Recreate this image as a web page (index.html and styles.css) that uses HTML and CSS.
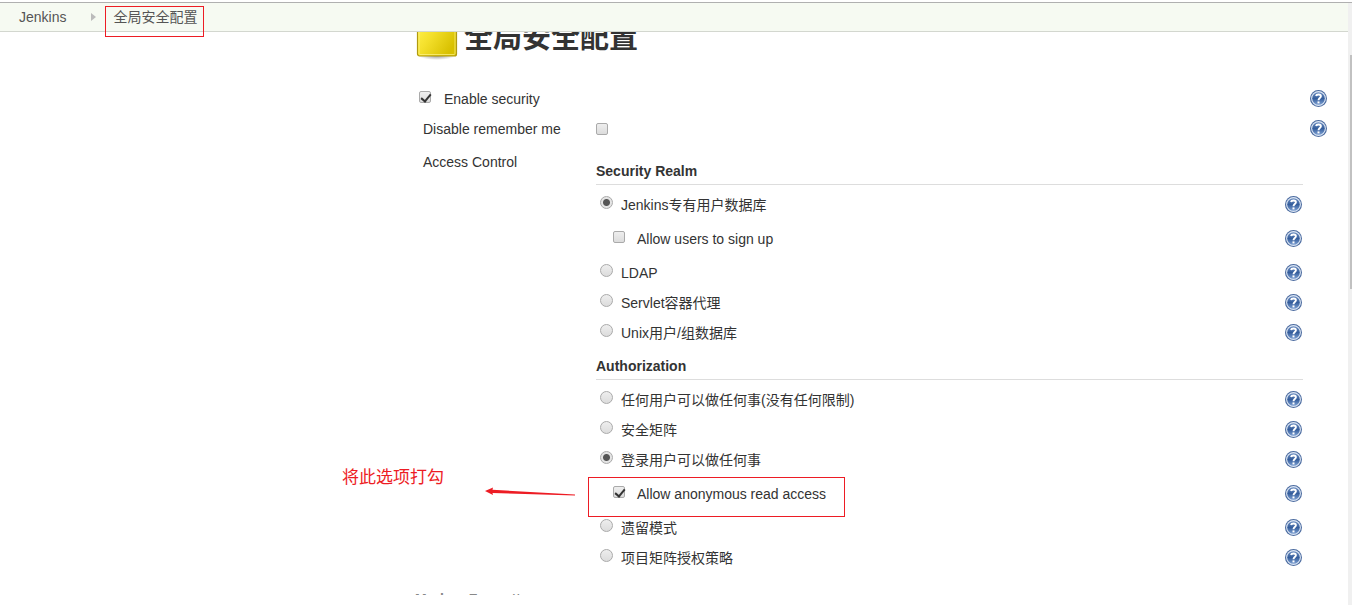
FILE: index.html
```
<!DOCTYPE html>
<html lang="zh-CN">
<head>
    <meta charset="UTF-8">
    <meta name="viewport" content="width=device-width, initial-scale=1.0">
    <title>全局安全配置 [Jenkins]</title>
    <link rel="stylesheet" href="styles.css">
</head>
<body>
    <svg class="defs" width="0" height="0" aria-hidden="true">
        <defs>
            <linearGradient id="helpFill" x1="0" y1="0" x2="0" y2="1">
                <stop offset="0" stop-color="#6f90c2"/>
                <stop offset="0.5" stop-color="#345d9c"/>
                <stop offset="1" stop-color="#7da0d2"/>
            </linearGradient>
            <linearGradient id="gold" x1="0" y1="0" x2="1" y2="0.5">
                <stop offset="0" stop-color="#fff04a"/>
                <stop offset="0.4" stop-color="#f4e02c"/>
                <stop offset="1" stop-color="#d8c000"/>
            </linearGradient>
            <radialGradient id="goldShadow">
                <stop offset="0" stop-color="#777" stop-opacity="0.7"/>
                <stop offset="1" stop-color="#777" stop-opacity="0"/>
            </radialGradient>
            <symbol id="help" viewBox="0 0 18 18">
                <circle cx="8.5" cy="8.5" r="8.5" fill="#4a6a9f"/>
                <circle cx="8.5" cy="8.5" r="7.4" fill="#dce6f4"/>
                <circle cx="8.5" cy="8.5" r="6.3" fill="url(#helpFill)"/>
                <path d="M6 6C6.4 4 10.9 3.8 10.9 6.3C10.9 8.1 8.5 8.1 8.5 10.3" fill="none" stroke="#fff" stroke-width="1.9"/>
                <rect x="7.5" y="11.4" width="2" height="2" fill="#fff"/>
            </symbol>
        </defs>
    </svg>

    <div class="page">
        <div class="main">
            <nav class="breadcrumbs">
                <a href="#">Jenkins</a>
                <svg class="separator" width="5" height="8" viewBox="0 0 5 8"><path d="M0 0L5 4L0 8Z" fill="#bbb"/></svg>
                <a href="#" class="current">全局安全配置</a>
            </nav>

            <div class="content">
                <h1>
                    <svg width="42" height="36" viewBox="0 0 42 36">
                        <ellipse cx="21" cy="31" rx="18" ry="4" fill="url(#goldShadow)"/>
                        <rect x="1.5" y="1" width="39" height="30" rx="2" fill="url(#gold)" stroke="#b09a10" stroke-width="1.2"/>
                        <rect x="3" y="2.5" width="36" height="27" rx="1" fill="none" stroke="#fff58a" stroke-opacity="0.7"/>
                    </svg>
                    全局安全配置
                </h1>

                <form>
                    <div class="setting enable">
                        <input type="checkbox" id="useSecurity" checked>
                        <label for="useSecurity">Enable security</label>
                        <button type="button" class="help" aria-label="Help"><svg><use href="#help"/></svg></button>
                    </div>
                    <div class="setting">
                        <label class="name" for="rememberMe">Disable remember me</label>
                        <input type="checkbox" id="rememberMe">
                        <button type="button" class="help" aria-label="Help"><svg><use href="#help"/></svg></button>
                    </div>

                    <div class="access">
                        <div class="name">Access Control</div>
                        <div class="groups">
                            <section>
                                <h2>Security Realm</h2>
                                <div class="option">
                                    <input type="radio" name="realm" id="realm0" checked>
                                    <label for="realm0">Jenkins专有用户数据库</label>
                                    <button type="button" class="help" aria-label="Help"><svg><use href="#help"/></svg></button>
                                </div>
                                <div class="option nested">
                                    <input type="checkbox" id="signup">
                                    <label for="signup">Allow users to sign up</label>
                                    <button type="button" class="help" aria-label="Help"><svg><use href="#help"/></svg></button>
                                </div>
                                <div class="option">
                                    <input type="radio" name="realm" id="realm1">
                                    <label for="realm1">LDAP</label>
                                    <button type="button" class="help" aria-label="Help"><svg><use href="#help"/></svg></button>
                                </div>
                                <div class="option">
                                    <input type="radio" name="realm" id="realm2">
                                    <label for="realm2">Servlet容器代理</label>
                                    <button type="button" class="help" aria-label="Help"><svg><use href="#help"/></svg></button>
                                </div>
                                <div class="option">
                                    <input type="radio" name="realm" id="realm3">
                                    <label for="realm3">Unix用户/组数据库</label>
                                    <button type="button" class="help" aria-label="Help"><svg><use href="#help"/></svg></button>
                                </div>
                            </section>

                            <section>
                                <h2>Authorization</h2>
                                <div class="option">
                                    <input type="radio" name="auth" id="auth0">
                                    <label for="auth0">任何用户可以做任何事(没有任何限制)</label>
                                    <button type="button" class="help" aria-label="Help"><svg><use href="#help"/></svg></button>
                                </div>
                                <div class="option">
                                    <input type="radio" name="auth" id="auth1">
                                    <label for="auth1">安全矩阵</label>
                                    <button type="button" class="help" aria-label="Help"><svg><use href="#help"/></svg></button>
                                </div>
                                <div class="option">
                                    <input type="radio" name="auth" id="auth2" checked>
                                    <label for="auth2">登录用户可以做任何事</label>
                                    <button type="button" class="help" aria-label="Help"><svg><use href="#help"/></svg></button>
                                </div>
                                <div class="option nested">
                                    <input type="checkbox" id="anonymous" checked>
                                    <label for="anonymous">Allow anonymous read access</label>
                                    <button type="button" class="help" aria-label="Help"><svg><use href="#help"/></svg></button>
                                    <span class="mark"></span>
                                    <svg class="arrow" width="90" height="10" viewBox="0 0 90 10">
                                        <path d="M0 4L8 0.5L7.5 2.8L90 7.6L90 8.4L7.5 6L8 8Z" fill="#ed1c24"/>
                                    </svg>
                                    <span class="note">将此选项打勾</span>
                                </div>
                                <div class="option">
                                    <input type="radio" name="auth" id="auth3">
                                    <label for="auth3">遗留模式</label>
                                    <button type="button" class="help" aria-label="Help"><svg><use href="#help"/></svg></button>
                                </div>
                                <div class="option">
                                    <input type="radio" name="auth" id="auth4">
                                    <label for="auth4">项目矩阵授权策略</label>
                                    <button type="button" class="help" aria-label="Help"><svg><use href="#help"/></svg></button>
                                </div>
                            </section>
                        </div>
                    </div>

                    <div class="formatter">Markup Formatter</div>
                </form>
            </div>
            <div class="bottom"></div>
        </div>
        <div class="scrollbar"><div class="thumb"></div></div>
    </div>
</body>
</html>
```
FILE: styles.css
```
* {
    box-sizing: border-box;
}
body {
    margin: 0;
    font-family: "Liberation Sans", Arial, "Noto Sans CJK SC", sans-serif;
    font-size: 14px;
    line-height: 20px;
    color: #333;
    background-color: #fff;
}
.defs {
    position: absolute;
}
.page {
    display: flex;
    height: 100vh;
    padding-top: 2px;
    overflow: hidden;
}
.main {
    flex: 1;
    display: flex;
    flex-direction: column;
    min-width: 0;
    border-top: 1px solid #b0b0b0;
}

/* breadcrumb bar */
.breadcrumbs {
    flex: none;
    display: flex;
    align-items: center;
    height: 29px;
    padding-left: 19px;
    background-color: #f6faf2;
    border-bottom: 1px solid #d3d7cf;
}
.breadcrumbs a {
    color: #555;
    text-decoration: none;
}
.separator {
    margin: 0 17px 0 25px;
}
.current {
    position: relative;
}
.current::after {
    content: "";
    position: absolute;
    top: -1px;
    left: -8px;
    right: -7px;
    height: 29px;
    border: 1px solid #ed1c24;
}

/* scrolled content */
.content {
    flex: 1;
    min-height: 0;
    overflow: hidden;
    padding: 0 20px 0 415px;
}
h1 {
    display: flex;
    align-items: flex-start;
    gap: 6px;
    height: 40px;
    margin: -8px 0 20px;
    padding: 1px 0 0 1px;
    font-size: 29px;
    line-height: 26px;
}
.setting {
    display: flex;
    align-items: center;
    height: 30px;
}
.enable {
    padding-left: 4px;
}
.enable label {
    margin-left: 13px;
}
.name {
    flex: none;
    width: 181px;
    padding-left: 8px;
}
.help {
    flex: none;
    width: 18px;
    height: 18px;
    margin-left: auto;
    padding: 0;
    border: 0;
    background: none;
}
.help svg {
    display: block;
    width: 18px;
    height: 18px;
}
.access {
    display: flex;
    padding-top: 8px;
}
.groups {
    flex: 1;
    min-width: 0;
    padding: 6px 25px 0 0;
}
section {
    padding-bottom: 5px;
}
h2 {
    margin: 0 0 5px;
    padding: 3px 0;
    font-size: 14px;
    line-height: 20px;
    border-bottom: 1px solid #ddd;
}
.option {
    position: relative;
    display: flex;
    align-items: center;
    height: 30px;
    padding-left: 4px;
}
.option label {
    margin-left: 8px;
}
.nested {
    height: 38px;
    padding-left: 17px;
}
.nested label {
    margin-left: 12px;
}

/* form controls */
input {
    appearance: none;
    flex: none;
    margin: 0;
    border: 1px solid #aaa;
    background: linear-gradient(#eee, #dcdcdc);
}
input[type="checkbox"] {
    position: relative;
    width: 12px;
    height: 12px;
    border-radius: 2px;
}
input[type="radio"] {
    width: 13px;
    height: 13px;
    border-radius: 50%;
}
.enable input, .option input {
    margin-bottom: 5px;
}
input[type="radio"]:checked {
    background: radial-gradient(circle, #555 3px, #e4e4e4 4px);
}
input[type="checkbox"]:checked::after {
    content: "";
    position: absolute;
    top: 0;
    left: 3px;
    width: 4px;
    height: 8px;
    border: solid #333;
    border-width: 0 2px 2px 0;
    transform: rotate(40deg);
}

/* red annotations */
.mark {
    position: absolute;
    top: 2px;
    left: -8px;
    width: 257px;
    height: 40px;
    border: 1px solid #ed1c24;
    pointer-events: none;
}
.arrow {
    position: absolute;
    top: 12px;
    left: -111px;
}
.note {
    position: absolute;
    top: -7px;
    left: -254px;
    font-size: 17px;
    white-space: nowrap;
    color: #ed1c24;
}

.formatter {
    margin-top: 11px;
    font-weight: bold;
    color: #888;
}
.bottom {
    flex: none;
    height: 10px;
}
.scrollbar {
    width: 4px;
    padding: 52px 0 0 2px;
    background-color: #f0f0f0;
    border-top: 1px solid #b0b0b0;
}
.thumb {
    height: 234px;
    background-color: #c1c1c1;
}
```
